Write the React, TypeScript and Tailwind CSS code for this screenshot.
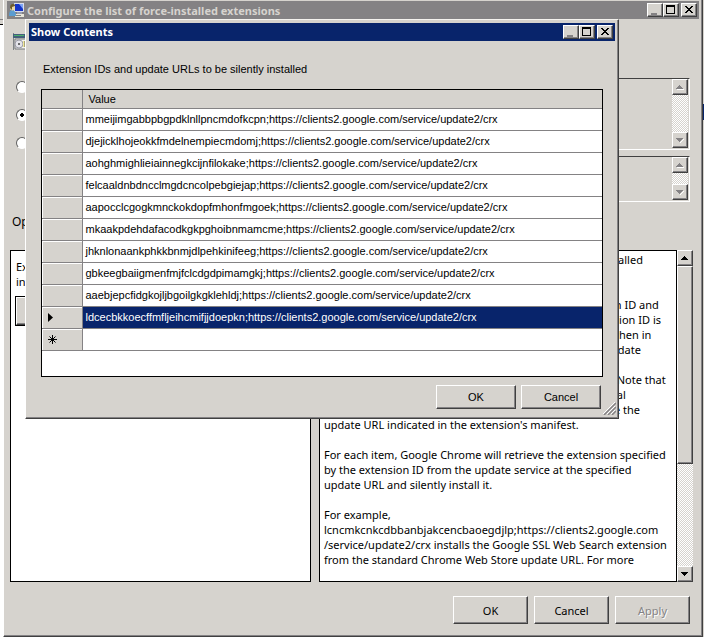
import React from 'react';
import clsx from 'clsx';

const entries = [
  'mmeijimgabbpbgpdklnllpncmdofkcpn',
  'djejicklhojeokkfmdelnempiecmdomj',
  'aohghmighlieiainnegkcijnfilokake',
  'felcaaldnbdncclmgdcncolpebgiejap',
  'aapocclcgogkmnckokdopfmhonfmgoek',
  'mkaakpdehdafacodkgkpghoibnmamcme',
  'jhknlonaankphkkbnmjdlpehkinifeeg',
  'gbkeegbaiigmenfmjfclcdgdpimamgkj',
  'aaebjepcfidgkojljbgoilgkgklehldj',
  'ldcecbkkoecffmfljeihcmifjjdoepkn',
];

const updateUrl = 'https://clients2.google.com/service/update2/crx';

const helpLines = [
  'Enables you to specify a list of extensions that will be installed',
  'silently, without user interaction.',
  '',
  'Every item of the list is a string that contains an extension ID and',
  'and an update URL delimited by semicolon (;). The extension ID is',
  'the 32-letter string found, e.g., on chrome://extensions when in',
  'developer mode. The update URL should point to one Update',
  'Manifest XML document as described in the',
  "Google Chrome's extension autoupdate documentation. Note that",
  'that update URL set in this policy is only used for the initial',
  'installation; subsequent updates of the extension will use the',
  "update URL indicated in the extension's manifest.",
  '',
  'For each item, Google Chrome will retrieve the extension specified',
  'by the extension ID from the update service at the specified',
  'update URL and silently install it.',
  '',
  'For example,',
  'lcncmkcnkcdbbanbjakcencbaoegdjlp;https://clients2.google.com',
  '/service/update2/crx installs the Google SSL Web Search extension',
  'from the standard Chrome Web Store update URL. For more',
];

const raised =
  'border border-t-white border-l-white border-r-[#404040] border-b-[#404040] bg-[#d6d3ce] shadow-[inset_-1px_-1px_0_#848284]';

const TitleButton = ({ kind }: { kind: 'Minimize' | 'Maximize' | 'Close' }) => (
  <button aria-label={kind} className={clsx(raised, 'flex h-[14px] w-4 items-center justify-center', kind === 'Close' && 'ml-[2px]')}>
    <svg width="10" height="10" viewBox="0 0 10 10" shapeRendering="crispEdges">
      {kind === 'Minimize' && <path d="M1 8h6v2H1z" fill="#848284" />}
      {kind === 'Maximize' && <path d="M0 0h9v9H0zM1 2v6h7V2z" fill="#000" fillRule="evenodd" />}
      {kind === 'Close' && (
        <path
          d="M1 1h2v1h1v1h2V2h1V1h2v1H8v1H7v1H6v1h1v1h1v1h1v1H7V7H6V6H4v1H3v1H1V7h1V6h1V5h1V4H3V3H2V2H1z"
          fill="#000"
        />
      )}
    </svg>
  </button>
);

const WindowButtons = () => (
  <div className="flex">
    <TitleButton kind="Minimize" />
    <TitleButton kind="Maximize" />
    <TitleButton kind="Close" />
  </div>
);

const Arrow = ({ up, disabled }: { up?: boolean; disabled?: boolean }) => (
  <svg width="8" height="5" viewBox="0 0 8 5" shapeRendering="crispEdges">
    {disabled && <path d={up ? 'M1 4h7v1H1z' : 'M4 4h1V3h1V2h1V1h1v1H7v1H6v1H5v1H4z'} fill="#fff" />}
    <path
      d={up ? 'M3 0h1v1h1v1h1v1h1v1H0V3h1V2h1V1h1z' : 'M0 0h7v1H6v1H5v1H4v1H3V3H2V2H1V1H0z'}
      fill={disabled ? '#848284' : '#000'}
    />
  </svg>
);

const ScrollBar = ({ disabled }: { disabled?: boolean }) => (
  <div className="flex w-4 flex-none flex-col bg-[repeating-conic-gradient(#fff_0%_25%,#d6d3ce_0%_50%)] bg-[length:2px_2px]">
    <button aria-label="Scroll up" disabled={disabled} className={clsx(raised, 'flex h-4 items-center justify-center')}>
      <Arrow up disabled={disabled} />
    </button>
    <div className="flex-1">{!disabled && <div className={clsx(raised, 'h-[66%]')} />}</div>
    <button aria-label="Scroll down" disabled={disabled} className={clsx(raised, 'flex h-4 items-center justify-center')}>
      <Arrow disabled={disabled} />
    </button>
  </div>
);

const PushButton = ({ children, className, disabled }: { children: string; className: string; disabled?: boolean }) => (
  <button
    disabled={disabled}
    className={clsx(raised, 'text-center disabled:text-[#848284] disabled:[text-shadow:1px_1px_0_#fff]', className)}
  >
    {children}
  </button>
);

const ReadOnlyBox = ({ label, className }: { label: string; className: string }) => (
  <div
    className={clsx(
      'flex border border-t-[#404040] border-l-[#404040] border-r-white border-b-white bg-[#d6d3ce] pr-px pb-px',
      className
    )}
  >
    <textarea aria-label={label} readOnly className="min-w-0 flex-1 resize-none overflow-hidden" />
    <ScrollBar disabled />
  </div>
);

const StateRadio = ({ label, checked }: { label: string; checked?: boolean }) => (
  <label className="flex h-7 items-center gap-2">
    <input
      type="radio"
      name="state"
      defaultChecked={checked}
      className="size-3 appearance-none rounded-full border border-t-[#606060] border-l-[#606060] border-r-white border-b-white bg-white checked:bg-[radial-gradient(circle,#000_0_2px,#fff_2px)]"
    />
    {label}
  </label>
);

const ComputerIcon = () => (
  <svg width="16" height="16" viewBox="0 0 16 16">
    <path d="M5 1h10v9H5z" fill="#d8dcec" />
    <path d="M6 2h8v7H6z" fill="#1434c8" />
    <path d="M10 2h4v5z" fill="#7ea4f4" />
    <path d="M8 10h5v2H8z" fill="#9aa0b0" />
    <path d="M6 12h9v3H6z" fill="#e8e6da" />
    <path d="M7 13h5v1H7z" fill="#808080" />
    <path d="M0 14c0-4 1-6 3-6s4 2 4 6z" fill="#5a9cd0" />
    <circle cx="3.500" cy="6" r="2.500" fill="#ecd9a4" />
    <path d="M1 6c0-3 1-4 3-4s2 1 2 2L3 5v3z" fill="#6c5c2c" />
  </svg>
);

const SettingIcon = () => (
  <svg width="24" height="18" viewBox="0 0 24 18">
    <path d="M0 0h1v17H0z" fill="#808488" />
    <path d="M0 1h24v4H0z" fill="#44607c" />
    <path d="M1 2h10v1H1z" fill="#4cb06c" />
    <path d="M2 6h22v10H2z" fill="#f4f4f0" stroke="#707478" />
    <circle cx="6" cy="11" r="4" fill="#e4e4ea" stroke="#9c9ca8" />
    <circle cx="6" cy="11" r="1" fill="#404040" />
    <path d="M10 8h6v6h-6z" fill="#f0e898" />
    <path d="M11 9h4M11 11h4M11 13h4" stroke="#606060" />
  </svg>
);

const ResizeGrip = () => (
  <svg width="13" height="13" viewBox="0 0 13 13" className="absolute right-[2px] bottom-[3px]">
    <path d="M0 12 12 0M4 12l8-8M8 12l4-4" stroke="#fff" />
    <path d="M1 13 13 1M5 13l8-8M9 13l4-4" stroke="#848284" strokeWidth="1.500" />
  </svg>
);

const ShowContents = () => (
  <div
    role="dialog"
    aria-labelledby="contents-title"
    className="absolute top-[19px] right-[83px] left-[21px] border border-t-[#f4f2ee] border-l-white border-r-[#404040] border-b-[#404040] bg-[#d6d3ce] p-[3px] font-['Liberation_Sans',sans-serif] text-[11px] leading-4 shadow-[inset_-1px_-1px_0_#848284]"
  >
    <div className="flex h-[18px] items-center justify-between bg-[#08246b] px-[2px]">
      <h2 id="contents-title" className="font-['Noto_Sans','Open_Sans',sans-serif] text-[11px] font-bold text-white">
        Show Contents
      </h2>
      <WindowButtons />
    </div>

    <p className="mt-5 ml-[14px]">Extension IDs and update URLs to be silently installed</p>

    <div className="mx-3 mt-3 border border-black bg-white pb-[25px]">
      <table className="w-full table-fixed border-collapse">
        <colgroup>
          <col className="w-10" />
          <col />
        </colgroup>
        <thead>
          <tr className="h-[18px] bg-[#d6d3ce]">
            <th className="border-r border-b border-[#848284]" aria-label="Row" />
            <th className="border-b border-[#848284] px-[6px] py-0 text-left font-normal">Value</th>
          </tr>
        </thead>
        <tbody>
          {entries.map((id, i) => {
            const selected = i === entries.length - 1;
            return (
              <tr key={id} className="h-[22px]">
                <td className="border-r border-b border-[#848284] bg-[#d6d3ce] p-0 shadow-[inset_1px_1px_0_#fff]">
                  {selected && (
                    <svg width="5" height="9" viewBox="0 0 5 9" className="ml-[6px]">
                      <path d="M0 0l5 4.500L0 9z" />
                    </svg>
                  )}
                </td>
                <td
                  className={clsx(
                    'border-b border-[#848284] px-[3px] py-0 whitespace-nowrap',
                    selected && 'bg-[#08246b] text-white'
                  )}
                >
                  {id};{updateUrl}
                </td>
              </tr>
            );
          })}
          <tr className="h-[22px]">
            <td className="border-r border-b border-[#848284] bg-[#d6d3ce] p-0 shadow-[inset_1px_1px_0_#fff]">
              <svg width="9" height="9" viewBox="0 0 9 9" className="ml-[6px]" stroke="#000">
                <path d="M4.500 0v9M0 4.500h9M1.500 1.500l6 6M7.500 1.500l-6 6" />
              </svg>
            </td>
            <td className="border-b border-[#848284]" />
          </tr>
        </tbody>
      </table>
    </div>

    <div className="mt-2 mb-[6px] flex justify-end gap-[5px] pr-[14px]">
      <PushButton className="h-6 w-20">OK</PushButton>
      <PushButton className="h-6 w-20">Cancel</PushButton>
    </div>
    <ResizeGrip />
  </div>
);

const App: React.FC = () => {
  return (
    <div className="flex min-h-screen bg-[#d6d3ce] font-['Noto_Sans','Open_Sans',sans-serif] text-[11px] leading-[15px] text-black">
      {/* Sliver of the window behind */}
      <div className="flex w-[3px] flex-none flex-col">
        <div className="h-5 border-b border-[#848284]" />
        <div className="h-[5px] border-b border-black" />
        <div className="flex-1 bg-white" />
      </div>

      {/* Policy window */}
      <div className="relative flex min-w-0 flex-1 flex-col border-r border-b border-l border-l-white border-r-[#404040] border-b-[#404040] px-[3px] pt-px pb-[3px] shadow-[inset_-1px_-1px_0_#848284]">
        <div className="flex h-[18px] items-center justify-between bg-[#848284] px-[2px]">
          <div className="flex items-center gap-[2px]">
            <ComputerIcon />
            <h1 className="text-[11px] font-bold text-[#d6d3ce]">Configure the list of force-installed extensions</h1>
          </div>
          <WindowButtons />
        </div>

        <div className="flex flex-1 flex-col pr-[6px] pl-[3px]">
          <div className="flex h-[54px] items-start pt-[14px] pl-[3px]">
            <SettingIcon />
          </div>

          <div className="flex h-[148px] gap-3">
            <fieldset className="w-[300px] pl-[6px]">
              <StateRadio label="Not Configured" />
              <StateRadio label="Enabled" checked />
              <StateRadio label="Disabled" />
            </fieldset>
            <div className="mt-[5px] flex min-w-0 flex-1 flex-col gap-[6px] pr-[3px]">
              <ReadOnlyBox label="Comment" className="h-[72px]" />
              <ReadOnlyBox label="Supported on" className="h-[46px]" />
            </div>
          </div>

          <p className="mt-[-7px] pl-[2px] text-[12px]">Options:</p>

          <div className="mt-[21px] flex h-[332px] gap-2">
            <div className="w-[301px] flex-none border border-black bg-white pt-2 pr-1 pl-[5px]">
              <p>
                Extension IDs and update URLs to be silently
                <br />
                installed
              </p>
              <PushButton className="mt-2 h-[28px] w-[75px] outline outline-black">Show...</PushButton>
            </div>
            <div className="flex min-w-0 flex-1">
              <div className="min-w-0 flex-1 overflow-hidden border border-black bg-white pt-px pl-1 whitespace-pre">
                {helpLines.map((line, i) => (
                  <p key={i} className="h-[15px]">
                    {line}
                  </p>
                ))}
              </div>
              <ScrollBar />
            </div>
          </div>

          <div className="mt-[14px] flex justify-end gap-[6px] pr-[3px] pb-2">
            <PushButton className="h-7 w-[75px]">OK</PushButton>
            <PushButton className="h-7 w-[75px]">Cancel</PushButton>
            <PushButton disabled className="h-7 w-[75px]">
              Apply
            </PushButton>
          </div>
        </div>

        <ShowContents />
      </div>

      {/* Right edge of the window behind */}
      <div className="flex w-px flex-none flex-col">
        <div className="h-[104px]" />
        <div className="h-4 bg-[#08246b]" />
      </div>
    </div>
  );
};

export default App;
